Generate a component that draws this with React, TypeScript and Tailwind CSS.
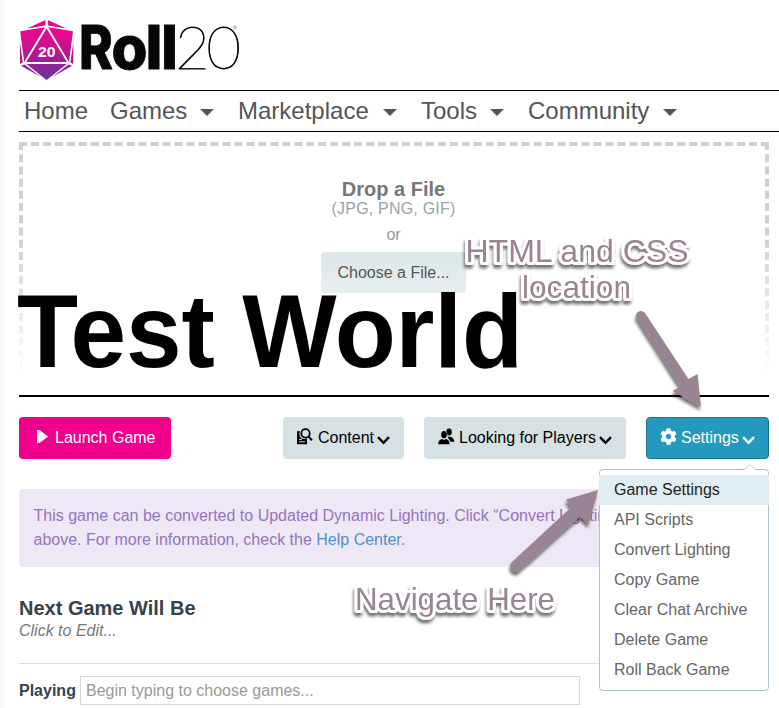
import React from "react";
import { FaCog } from "react-icons/fa";

const menuItems = [
  "API Scripts",
  "Convert Lighting",
  "Copy Game",
  "Clear Chat Archive",
  "Delete Game",
  "Roll Back Game",
];

function Logo() {
  return (
    <svg width="222" height="72" viewBox="0 0 222 72" className="block shrink-0 overflow-visible" aria-label="Roll20">
      <defs>
        <linearGradient id="die" x1="0" y1="0" x2="0" y2="60" gradientUnits="userSpaceOnUse">
          <stop offset="0" stopColor="#f0048c" />
          <stop offset="0.3" stopColor="#e30a8b" />
          <stop offset="1" stopColor="#66339a" />
        </linearGradient>
      </defs>
      <g fill="url(#die)" transform="translate(0 1)">
        <path d="M26.4 1 L8 9.6 L26.4 6.6 Z" />
        <path d="M28.8 1 L47.2 9.6 L28.8 6.6 Z" />
        <path d="M1.2 12.2 L26 8.2 L5.2 43 Z" />
        <path d="M54 12.2 L29.2 8.2 L50 43 Z" />
        <path d="M27.6 9.6 L48 43 H7.2 Z" />
        <path d="M0.8 23 L3.8 43.4 L1 45 Z" />
        <path d="M54.4 23 L51.4 43.4 L54.2 45 Z" />
        <path d="M7.4 45 H47.8 L27.6 61 Z" />
        <path d="M2 46.8 L5.6 45.4 L22 58 Z" />
        <path d="M53.2 46.8 L49.6 45.4 L33.2 58 Z" />
      </g>
      <text x="19" y="38.5" fontSize="15.5" fontWeight="700" fill="#fff" textLength="17.5" lengthAdjust="spacingAndGlyphs" fontFamily="Liberation Sans, sans-serif">20</text>
      <g fontWeight="800" fill="#050608" stroke="#050608" strokeWidth="0.8" fontFamily="Inter, sans-serif" fontSize="60">
        <text x="60" y="51" textLength="34" lengthAdjust="spacingAndGlyphs">R</text>
        <text x="92.5" y="51" textLength="36" lengthAdjust="spacingAndGlyphs">o</text>
        <text x="126.5" y="51">l</text>
        <text x="142" y="51">l</text>
      </g>
      <text x="156" y="51" fontSize="60" fontWeight="100" fill="#050608" stroke="#050608" strokeWidth="0.8" textLength="66" lengthAdjust="spacing" fontFamily="Lato, sans-serif">20</text>
      <text x="214" y="11.5" fontSize="5" fill="#555" fontFamily="Liberation Sans, sans-serif">®</text>
    </svg>
  );
}

function NavItem({ label, width, menu = true }: { label: string; width: string; menu?: boolean }) {
  return (
    <div className={`flex items-center ${width}`}>
      <span className="whitespace-nowrap">{label}</span>
      {menu && (
        <svg width="14" height="7" viewBox="0 0 14 7" className="mt-[3px] ml-auto shrink-0">
          <path d="M0 0H14L7 7Z" fill="#555" />
        </svg>
      )}
    </div>
  );
}

function Chevron() {
  return (
    <svg width="13" height="9" viewBox="0 0 13 9" className="mt-[4px] ml-[3px] shrink-0">
      <path d="M1 1.2L6.5 6.8L12 1.2" fill="none" stroke="currentColor" strokeWidth="2.4" />
    </svg>
  );
}

function ContentIcon() {
  return (
    <svg width="17" height="17" viewBox="0 0 17 17" className="mr-[5px] -mt-1 shrink-0">
      <path d="M1 3.2H4.2A5 5 0 0 0 9 11L11 10.3V16.2H1Z" fill="currentColor" />
      <path d="M3 11.3H6M3 13.8H9" stroke="#d6e1e5" strokeWidth="1" />
      <circle cx="9.5" cy="5.4" r="4.2" fill="#d6e1e5" stroke="currentColor" strokeWidth="1.8" />
      <path d="M12.4 8.5L16 12.2" stroke="currentColor" strokeWidth="2" />
    </svg>
  );
}

function PlayersIcon() {
  return (
    <svg width="17" height="17" viewBox="0 0 17 17" className="mr-1 -mt-1 shrink-0" fill="currentColor">
      <ellipse cx="11" cy="4" rx="2.8" ry="3.5" />
      <path d="M9.5 8.8C14 8.2 16.3 10.4 16.3 13.8H12.5Z" />
      <ellipse cx="6" cy="6.7" rx="3.3" ry="4.1" fill="#d6e1e5" />
      <ellipse cx="6" cy="6.7" rx="2.8" ry="3.6" />
      <path d="M0.2 16.2C0.2 12.8 2 11.5 4.2 11L6 12L7.8 11C10 11.5 11.6 12.8 11.6 16.2Z" />
    </svg>
  );
}

function Annotations() {
  return (
    <svg width="779" height="708" viewBox="0 0 779 708" className="pointer-events-none absolute top-0 -left-1 z-20">
      <defs>
        <filter id="lift" x="-20%" y="-20%" width="140%" height="150%">
          <feDropShadow dx="-1" dy="3.5" stdDeviation="1.8" floodColor="#000" floodOpacity="0.55" />
        </filter>
      </defs>
      <g filter="url(#lift)" fill="#9a8494">
        <path d="M636.8 318.8A5 5 0 0 1 645.2 313.3L688.5 379L697.5 374L701 407L672.5 391L680 386.5Z" />
        <path d="M511.4 562.5L571 507.5L566 499.5L598 490L588.5 524.5L580 516.5L518.5 571.5A6 6 0 0 1 511.4 562.5Z" />
      </g>
      <g
        filter="url(#lift)"
        fill="#9a8494"
        stroke="#fff"
        strokeWidth="6"
        strokeLinejoin="round"
        paintOrder="stroke"
        fontFamily="Liberation Sans, Arial, sans-serif"
        fontSize="31.5"
      >
        <text x="465.5" y="261.5" textLength="223" lengthAdjust="spacingAndGlyphs">HTML and CSS</text>
        <text x="522" y="297.5" textLength="109" lengthAdjust="spacingAndGlyphs">location</text>
        <text x="355" y="609.5" textLength="200" lengthAdjust="spacingAndGlyphs">Navigate Here</text>
      </g>
    </svg>
  );
}

export default function App() {
  return (
    <div className="relative h-[708px] w-[779px] overflow-hidden border-l-4 border-[#fafafa] bg-white pl-[15px] font-['Liberation_Sans',Arial,sans-serif] text-base text-black">
      <header className="flex h-[90px] items-start pt-[18px]">
        <Logo />
      </header>

      <nav className="flex h-[42px] items-center gap-6 border-y border-black pl-[5px] text-2xl text-[#555]">
        <NavItem label="Home" width="w-[62px]" menu={false} />
        <NavItem label="Games" width="w-[104px]" />
        <NavItem label="Marketplace" width="w-[159px]" />
        <NavItem label="Tools" width="w-[83px]" />
        <NavItem label="Community" width="w-[149px]" />
      </nav>

      <main className="w-[750px]">
        <section className="mt-[10px] h-[255px] border-b-2 border-black">
          <div className="grid h-[232px]">
            <div className="col-start-1 row-start-1 border-4 border-b-0 border-dashed border-[#d0d0d0] [mask-image:linear-gradient(#000_40%,transparent_98%)]" />
            <div className="col-start-1 row-start-1 flex flex-col items-center pt-[35px]">
              <div className="mr-px text-xl leading-6 font-bold text-[#777]">Drop a File</div>
              <div className="mr-px leading-4 tracking-[0.2px] text-[#98a3a8]">(JPG, PNG, GIF)</div>
              <div className="mt-2 mr-px leading-5 text-[#999]">or</div>
              <button className="mt-[7px] mr-0.5 h-[41px] w-[145px] shrink-0 rounded bg-linear-to-b from-[#dde6e9] to-[#e8eef0] pl-px text-[#555]">
                Choose a File...
              </button>
              <h1 className="-mt-[11px] -ml-0.5 origin-[0_86px] scale-y-104 self-start text-[100px] leading-[100px] font-bold tracking-[-0.15px] whitespace-nowrap">
                Test World
              </h1>
            </div>
          </div>
        </section>

        <section className="mt-5 flex h-[42px]">
          <button className="flex w-[152px] items-center rounded bg-[#f0008c] pl-[18px] text-white">
            <svg width="11" height="13" viewBox="0 0 11 13" className="-mt-[3px] mr-[7px]">
              <path d="M0 0H2.5L11 6.5L2.5 13H0Z" fill="#fff" />
            </svg>
            Launch Game
          </button>
          <button className="ml-28 flex w-[121px] items-center rounded bg-[#d6e1e5] pl-[13px] whitespace-nowrap">
            <ContentIcon />
            Content
            <Chevron />
          </button>
          <button className="ml-5 flex w-[202px] items-center rounded bg-[#d6e1e5] pl-[14px] whitespace-nowrap">
            <PlayersIcon />
            Looking for Players
            <Chevron />
          </button>
          <div className="relative ml-5 w-[123px]">
            <button className="flex h-full w-full items-center rounded border border-[#19748f] bg-[#2599bd] pl-[13px] whitespace-nowrap text-white">
              <FaCog size={17} className="-mt-[3px] mr-[4px] shrink-0" />
              Settings
              <Chevron />
            </button>
            <div className="absolute top-[52px] right-0 z-10 h-[222px] w-[170px] rounded border border-[#adc2cb] bg-white pt-[5px]">
              <svg width="12" height="7" viewBox="0 0 12 7" className="absolute -top-[6px] right-3">
                <path d="M0 6L6 0.5L12 6V7H0Z" fill="#fff" />
                <path d="M0.5 5.5L6 0.5L11.5 5.5" fill="none" stroke="#bdced5" />
              </svg>
              <div className="-mx-px h-[30px] bg-[#e0edf2] pl-[15px] leading-[29px] text-[#222]">Game Settings</div>
              {menuItems.map((item) => (
                <div key={item} className="h-[30px] pl-[14px] leading-[29px] whitespace-nowrap text-[#666]">
                  {item}
                </div>
              ))}
            </div>
          </div>
        </section>

        <section className="mt-[30px] h-[78px] rounded bg-[#eee8f6] px-[14.5px] pt-[15px] leading-6 whitespace-nowrap text-[#9474bd]">
          <p>This game can be converted to Updated Dynamic Lighting. Click “Convert Lighting”</p>
          <p>
            above. For more information, check the <a className="text-[#528ecb]">Help Center</a>.
          </p>
        </section>

        <section className="mt-[29px] h-[68px] border-b border-[#ddd]">
          <h2 className="text-xl leading-6 font-bold text-[#36434a]">Next Game Will Be</h2>
          <p className="leading-[22px] text-[#777] italic">Click to Edit...</p>
        </section>

        <section className="mt-3 flex h-[29px] items-center">
          <span className="w-[61px] font-bold text-[#36434a]">Playing</span>
          <div className="flex h-[29px] w-[500px] items-center border border-[#d8d8d8] pl-[5px] text-[#999]">
            Begin typing to choose games...
          </div>
        </section>
      </main>

      <Annotations />
    </div>
  );
}
